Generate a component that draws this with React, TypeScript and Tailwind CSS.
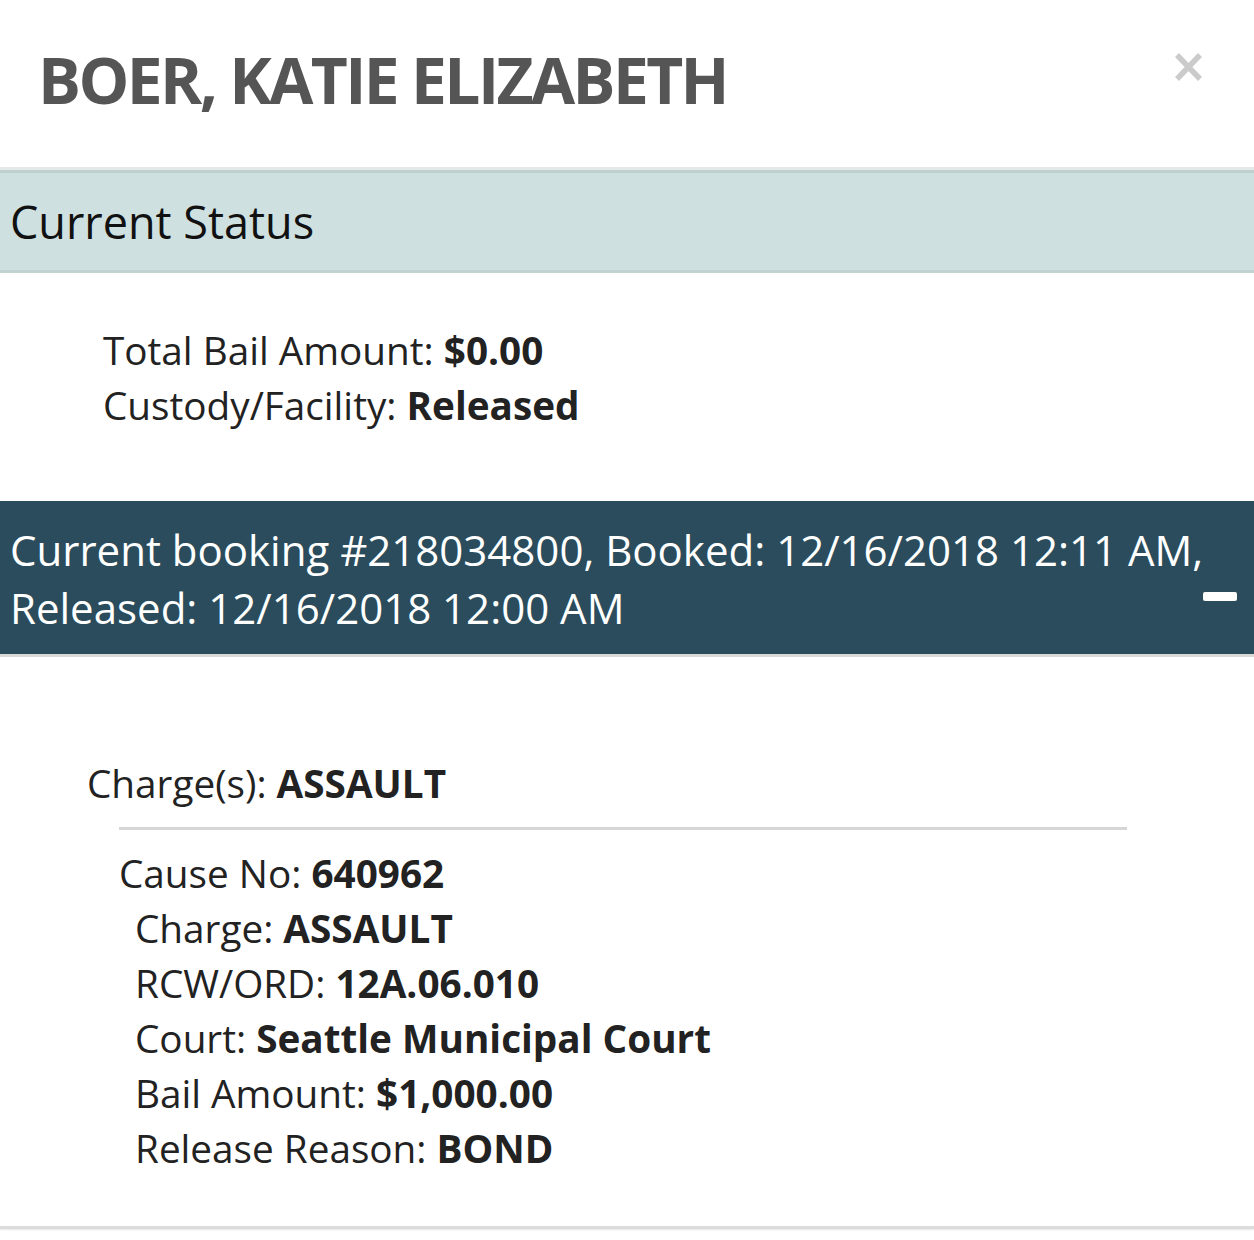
export default function App() {
  return (
    <div
      className="w-[1254px] h-[1240px] bg-white overflow-hidden text-[#222]"
      style={{ fontFamily: '"Open Sans", "Liberation Sans", sans-serif' }}
    >
      <div className="relative h-[170px] border-b-[3px] border-[#e4e8e8]">
        <h1 className="pl-[38px] pt-[40px] text-[64px] font-bold leading-[80px] text-[#555] tracking-[-2.6px]">
          BOER, KATIE ELIZABETH
        </h1>
        <svg
          className="absolute right-[51px] top-[52px]"
          width="29"
          height="30"
          viewBox="0 0 29 30"
        >
          <path d="M3 3 L26 27 M26 3 L3 27" stroke="#cbcbcb" strokeWidth="5.5" strokeLinecap="butt" />
        </svg>
      </div>

      <div className="h-[103px] bg-[#cfe0e0] border-t-[3px] border-b-[3px] border-t-[#bfd0d0] border-b-[#c0d3d0] flex items-center pl-[10px]">
        <span className="text-[45px] leading-[56px] text-[#111]">Current Status</span>
      </div>

      <div className="pl-[103px] pt-[50px] h-[228px] text-[38.7px] leading-[55px] text-[#222]">
        <div>
          Total Bail Amount: <b>$0.00</b>
        </div>
        <div>
          Custody/Facility: <b>Released</b>
        </div>
      </div>

      <div className="relative h-[156px] bg-[#2a4c5c] border-b-[3px] border-[#d8d8d4] pl-[10px] pt-[20px] text-white text-[42px] leading-[58px]">
        <div>Current booking #218034800, Booked: 12/16/2018 12:11 AM,</div>
        <div>Released: 12/16/2018 12:00 AM</div>
        <div className="absolute right-[17px] top-[91px] w-[34px] h-[9px] bg-white rounded-[2px]" />
      </div>

      <div className="pt-[99px] text-[38.7px] leading-[55px]">
        <div className="pl-[87px]">
          Charge(s): <b>ASSAULT</b>
        </div>
        <div className="ml-[119px] w-[1008px] mt-[16px] h-[3px] bg-[#d6d6d6]" />
        <div className="pl-[119px] pt-[16px]">
          <div>
            Cause No: <b>640962</b>
          </div>
          <div className="pl-[16px]">
            <div>
              Charge: <b>ASSAULT</b>
            </div>
            <div>
              RCW/ORD: <b>12A.06.010</b>
            </div>
            <div>
              Court: <b>Seattle Municipal Court</b>
            </div>
            <div>
              Bail Amount: <b>$1,000.00</b>
            </div>
            <div>
              Release Reason: <b>BOND</b>
            </div>
          </div>
        </div>
        <div className="mt-[50px] h-[3px] bg-[#dcdcdc] shadow-[0_1px_2px_rgba(0,0,0,0.1)]" />
      </div>
    </div>
  );
}
